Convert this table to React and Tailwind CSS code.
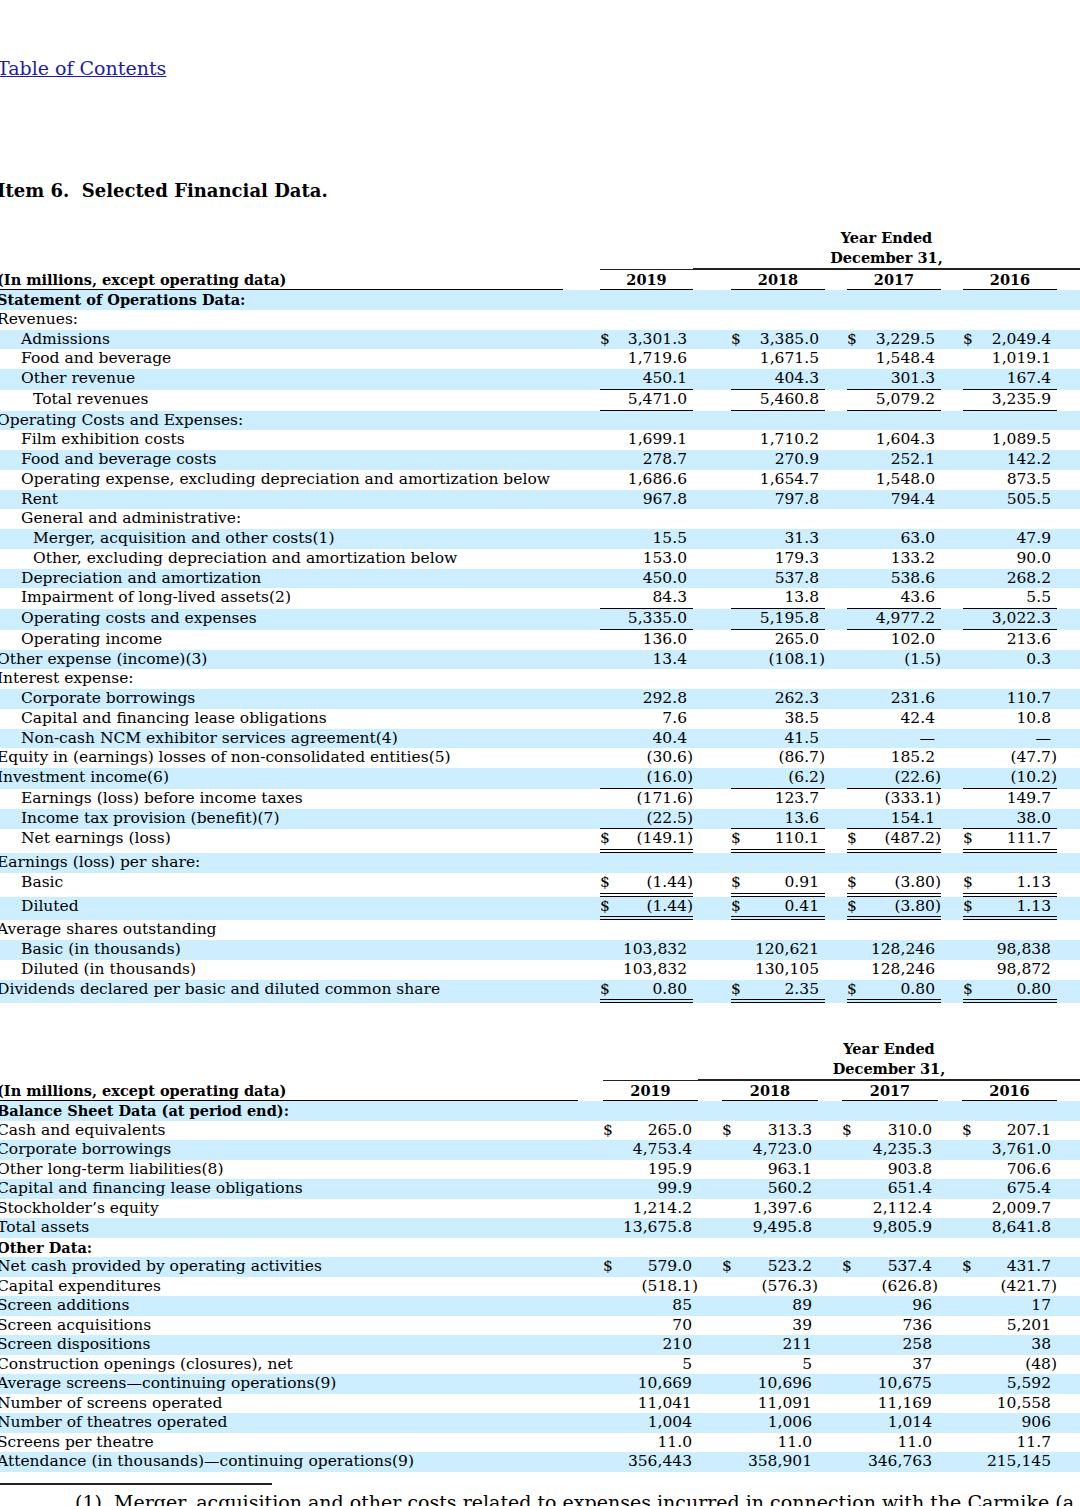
const FONT = "font-['DejaVu_Serif',serif]";

const TOP_COLS = {
  label: 'w-[566px]',
  gaps: ['w-[37px]', 'w-[38px]', 'w-[22px]', 'w-[22px]'],
  blocks: ['w-[93px]', 'w-[94px]', 'w-[94px]', 'w-[94px]'],
  lead: 'leading-[19.75px]',
};

const BOTTOM_COLS = {
  label: 'w-[581px]',
  gaps: ['w-[25px]', 'w-[24px]', 'w-[24px]', 'w-[24px]'],
  blocks: ['w-[95px]', 'w-[96px]', 'w-[96px]', 'w-[95px]'],
  lead: 'leading-[19.5px]',
};

const YEARS = ['2019', '2018', '2017', '2016'];

const operations = [
  { l: 'Statement of Operations Data:', b: true },
  { l: 'Revenues:' },
  { l: 'Admissions', i: 1, d: true, v: ['3,301.3', '3,385.0', '3,229.5', '2,049.4'] },
  { l: 'Food and beverage', i: 1, v: ['1,719.6', '1,671.5', '1,548.4', '1,019.1'] },
  { l: 'Other revenue', i: 1, v: ['450.1', '404.3', '301.3', '167.4'], u: 1 },
  { l: 'Total revenues', i: 2, v: ['5,471.0', '5,460.8', '5,079.2', '3,235.9'], u: 1 },
  { l: 'Operating Costs and Expenses:' },
  { l: 'Film exhibition costs', i: 1, v: ['1,699.1', '1,710.2', '1,604.3', '1,089.5'] },
  { l: 'Food and beverage costs', i: 1, v: ['278.7', '270.9', '252.1', '142.2'] },
  { l: 'Operating expense, excluding depreciation and amortization below', i: 1, v: ['1,686.6', '1,654.7', '1,548.0', '873.5'] },
  { l: 'Rent', i: 1, v: ['967.8', '797.8', '794.4', '505.5'] },
  { l: 'General and administrative:', i: 1 },
  { l: 'Merger, acquisition and other costs(1)', i: 2, v: ['15.5', '31.3', '63.0', '47.9'] },
  { l: 'Other, excluding depreciation and amortization below', i: 2, v: ['153.0', '179.3', '133.2', '90.0'] },
  { l: 'Depreciation and amortization', i: 1, v: ['450.0', '537.8', '538.6', '268.2'] },
  { l: 'Impairment of long-lived assets(2)', i: 1, v: ['84.3', '13.8', '43.6', '5.5'], u: 1 },
  { l: 'Operating costs and expenses', i: 1, v: ['5,335.0', '5,195.8', '4,977.2', '3,022.3'], u: 1 },
  { l: 'Operating income', i: 1, v: ['136.0', '265.0', '102.0', '213.6'] },
  { l: 'Other expense (income)(3)', v: ['13.4', '(108.1)', '(1.5)', '0.3'] },
  { l: 'Interest expense:' },
  { l: 'Corporate borrowings', i: 1, v: ['292.8', '262.3', '231.6', '110.7'] },
  { l: 'Capital and financing lease obligations', i: 1, v: ['7.6', '38.5', '42.4', '10.8'] },
  { l: 'Non-cash NCM exhibitor services agreement(4)', i: 1, v: ['40.4', '41.5', '—', '—'] },
  { l: 'Equity in (earnings) losses of non-consolidated entities(5)', v: ['(30.6)', '(86.7)', '185.2', '(47.7)'] },
  { l: 'Investment income(6)', v: ['(16.0)', '(6.2)', '(22.6)', '(10.2)'], u: 1 },
  { l: 'Earnings (loss) before income taxes', i: 1, v: ['(171.6)', '123.7', '(333.1)', '149.7'] },
  { l: 'Income tax provision (benefit)(7)', i: 1, v: ['(22.5)', '13.6', '154.1', '38.0'], u: 1 },
  { l: 'Net earnings (loss)', i: 1, d: true, v: ['(149.1)', '110.1', '(487.2)', '111.7'], u: 2 },
  { l: 'Earnings (loss) per share:' },
  { l: 'Basic', i: 1, d: true, v: ['(1.44)', '0.91', '(3.80)', '1.13'], u: 2 },
  { l: 'Diluted', i: 1, d: true, v: ['(1.44)', '0.41', '(3.80)', '1.13'], u: 2 },
  { l: 'Average shares outstanding' },
  { l: 'Basic (in thousands)', i: 1, v: ['103,832', '120,621', '128,246', '98,838'] },
  { l: 'Diluted (in thousands)', i: 1, v: ['103,832', '130,105', '128,246', '98,872'] },
  { l: 'Dividends declared per basic and diluted common share', d: true, v: ['0.80', '2.35', '0.80', '0.80'], u: 2 },
];

const balance = [
  { l: 'Balance Sheet Data (at period end):', b: true },
  { l: 'Cash and equivalents', d: true, v: ['265.0', '313.3', '310.0', '207.1'] },
  { l: 'Corporate borrowings', v: ['4,753.4', '4,723.0', '4,235.3', '3,761.0'] },
  { l: 'Other long-term liabilities(8)', v: ['195.9', '963.1', '903.8', '706.6'] },
  { l: 'Capital and financing lease obligations', v: ['99.9', '560.2', '651.4', '675.4'] },
  { l: 'Stockholder’s equity', v: ['1,214.2', '1,397.6', '2,112.4', '2,009.7'] },
  { l: 'Total assets', v: ['13,675.8', '9,495.8', '9,805.9', '8,641.8'] },
  { l: 'Other Data:', b: true },
  { l: 'Net cash provided by operating activities', d: true, v: ['579.0', '523.2', '537.4', '431.7'] },
  { l: 'Capital expenditures', v: ['(518.1)', '(576.3)', '(626.8)', '(421.7)'] },
  { l: 'Screen additions', v: ['85', '89', '96', '17'] },
  { l: 'Screen acquisitions', v: ['70', '39', '736', '5,201'] },
  { l: 'Screen dispositions', v: ['210', '211', '258', '38'] },
  { l: 'Construction openings (closures), net', v: ['5', '5', '37', '(48)'] },
  { l: 'Average screens—continuing operations(9)', v: ['10,669', '10,696', '10,675', '5,592'] },
  { l: 'Number of screens operated', v: ['11,041', '11,091', '11,169', '10,558'] },
  { l: 'Number of theatres operated', v: ['1,004', '1,006', '1,014', '906'] },
  { l: 'Screens per theatre', v: ['11.0', '11.0', '11.0', '11.7'] },
  { l: 'Attendance (in thousands)—continuing operations(9)', v: ['356,443', '358,901', '346,763', '215,145'] },
];

const indents = ['pl-0', 'pl-[24px]', 'pl-[36px]'];

function HeaderRows({ cols }) {
  return (
    <div className="font-bold text-[14.5px]">
      {/* Year Ended caption */}
      <div className="flex">
        <div className={`${cols.label} shrink-0`} />
        <div className={`${cols.gaps[0]} shrink-0`} />
        <div className={`${cols.blocks[0]} shrink-0 border-b border-[#222]`} />
        <div className="flex-1 border-b-2 border-[#222] text-center leading-[20px]">
          <div>Year Ended</div>
          <div>December 31,</div>
        </div>
      </div>
      {/* Years */}
      <div className="flex leading-[19px]">
        <div className={`${cols.label} shrink-0 border-b border-black whitespace-nowrap`}>
          (In millions, except operating data)
        </div>
        {YEARS.map((y, k) => (
          <div key={y} className="flex shrink-0">
            <div className={cols.gaps[k]} />
            <div className={`${cols.blocks[k]} border-b border-black text-center`}>{y}</div>
          </div>
        ))}
      </div>
    </div>
  );
}

function DataRow({ row, idx, cols }) {
  const stripe = idx % 2 === 0 ? 'bg-[#cceeff]' : 'bg-white';
  const line =
    row.u === 1 ? 'border-b border-black' : row.u === 2 ? 'border-b-4 border-double border-black' : '';
  return (
    <div className={`flex ${cols.lead} ${stripe}`}>
      <div
        className={`${cols.label} ${indents[row.i || 0]} shrink-0 whitespace-nowrap ${
          row.b ? 'font-bold text-[14.5px]' : ''
        }`}
      >
        {row.l}
      </div>
      {row.v &&
        row.v.map((val, k) => (
          <div key={k} className="flex shrink-0">
            <div className={cols.gaps[k]} />
            <div className={`${cols.blocks[k]} ${line} flex justify-between`}>
              <span>{row.d ? '$' : ''}</span>
              <span className={val.endsWith(')') ? 'pr-0' : 'pr-[6px]'}>{val}</span>
            </div>
          </div>
        ))}
    </div>
  );
}

function FinTable({ rows, cols, className }) {
  return (
    <div className={className}>
      <HeaderRows cols={cols} />
      {rows.map((row, idx) => (
        <DataRow key={row.l + idx} row={row} idx={idx} cols={cols} />
      ))}
    </div>
  );
}

export default function App() {
  return (
    <div className={`${FONT} text-[15.5px] text-black bg-white min-h-screen overflow-hidden`}>
      <div className="-ml-[3px]">
        <div className="pt-[57px] leading-[22px] text-[19px]">
          <a href="#" className="text-[#1c1ca6] underline">Table of Contents</a>
        </div>

        <h1 className="mt-[100px] text-[18px] font-bold leading-[23px] whitespace-pre">
          {'Item 6.  Selected Financial Data.'}
        </h1>

        <FinTable rows={operations} cols={TOP_COLS} className="mt-[26px]" />

        <FinTable rows={balance} cols={BOTTOM_COLS} className="mt-[36px]" />

        <div className="mt-[11px] w-[275px] border-b-2 border-[#222]" />
        <p className="mt-[6px] pl-[78px] text-[19px] leading-[22px] whitespace-nowrap">
          (1)&nbsp;&nbsp;Merger, acquisition and other costs related to expenses incurred in connection with the Carmike (a
        </p>
      </div>
    </div>
  );
}
